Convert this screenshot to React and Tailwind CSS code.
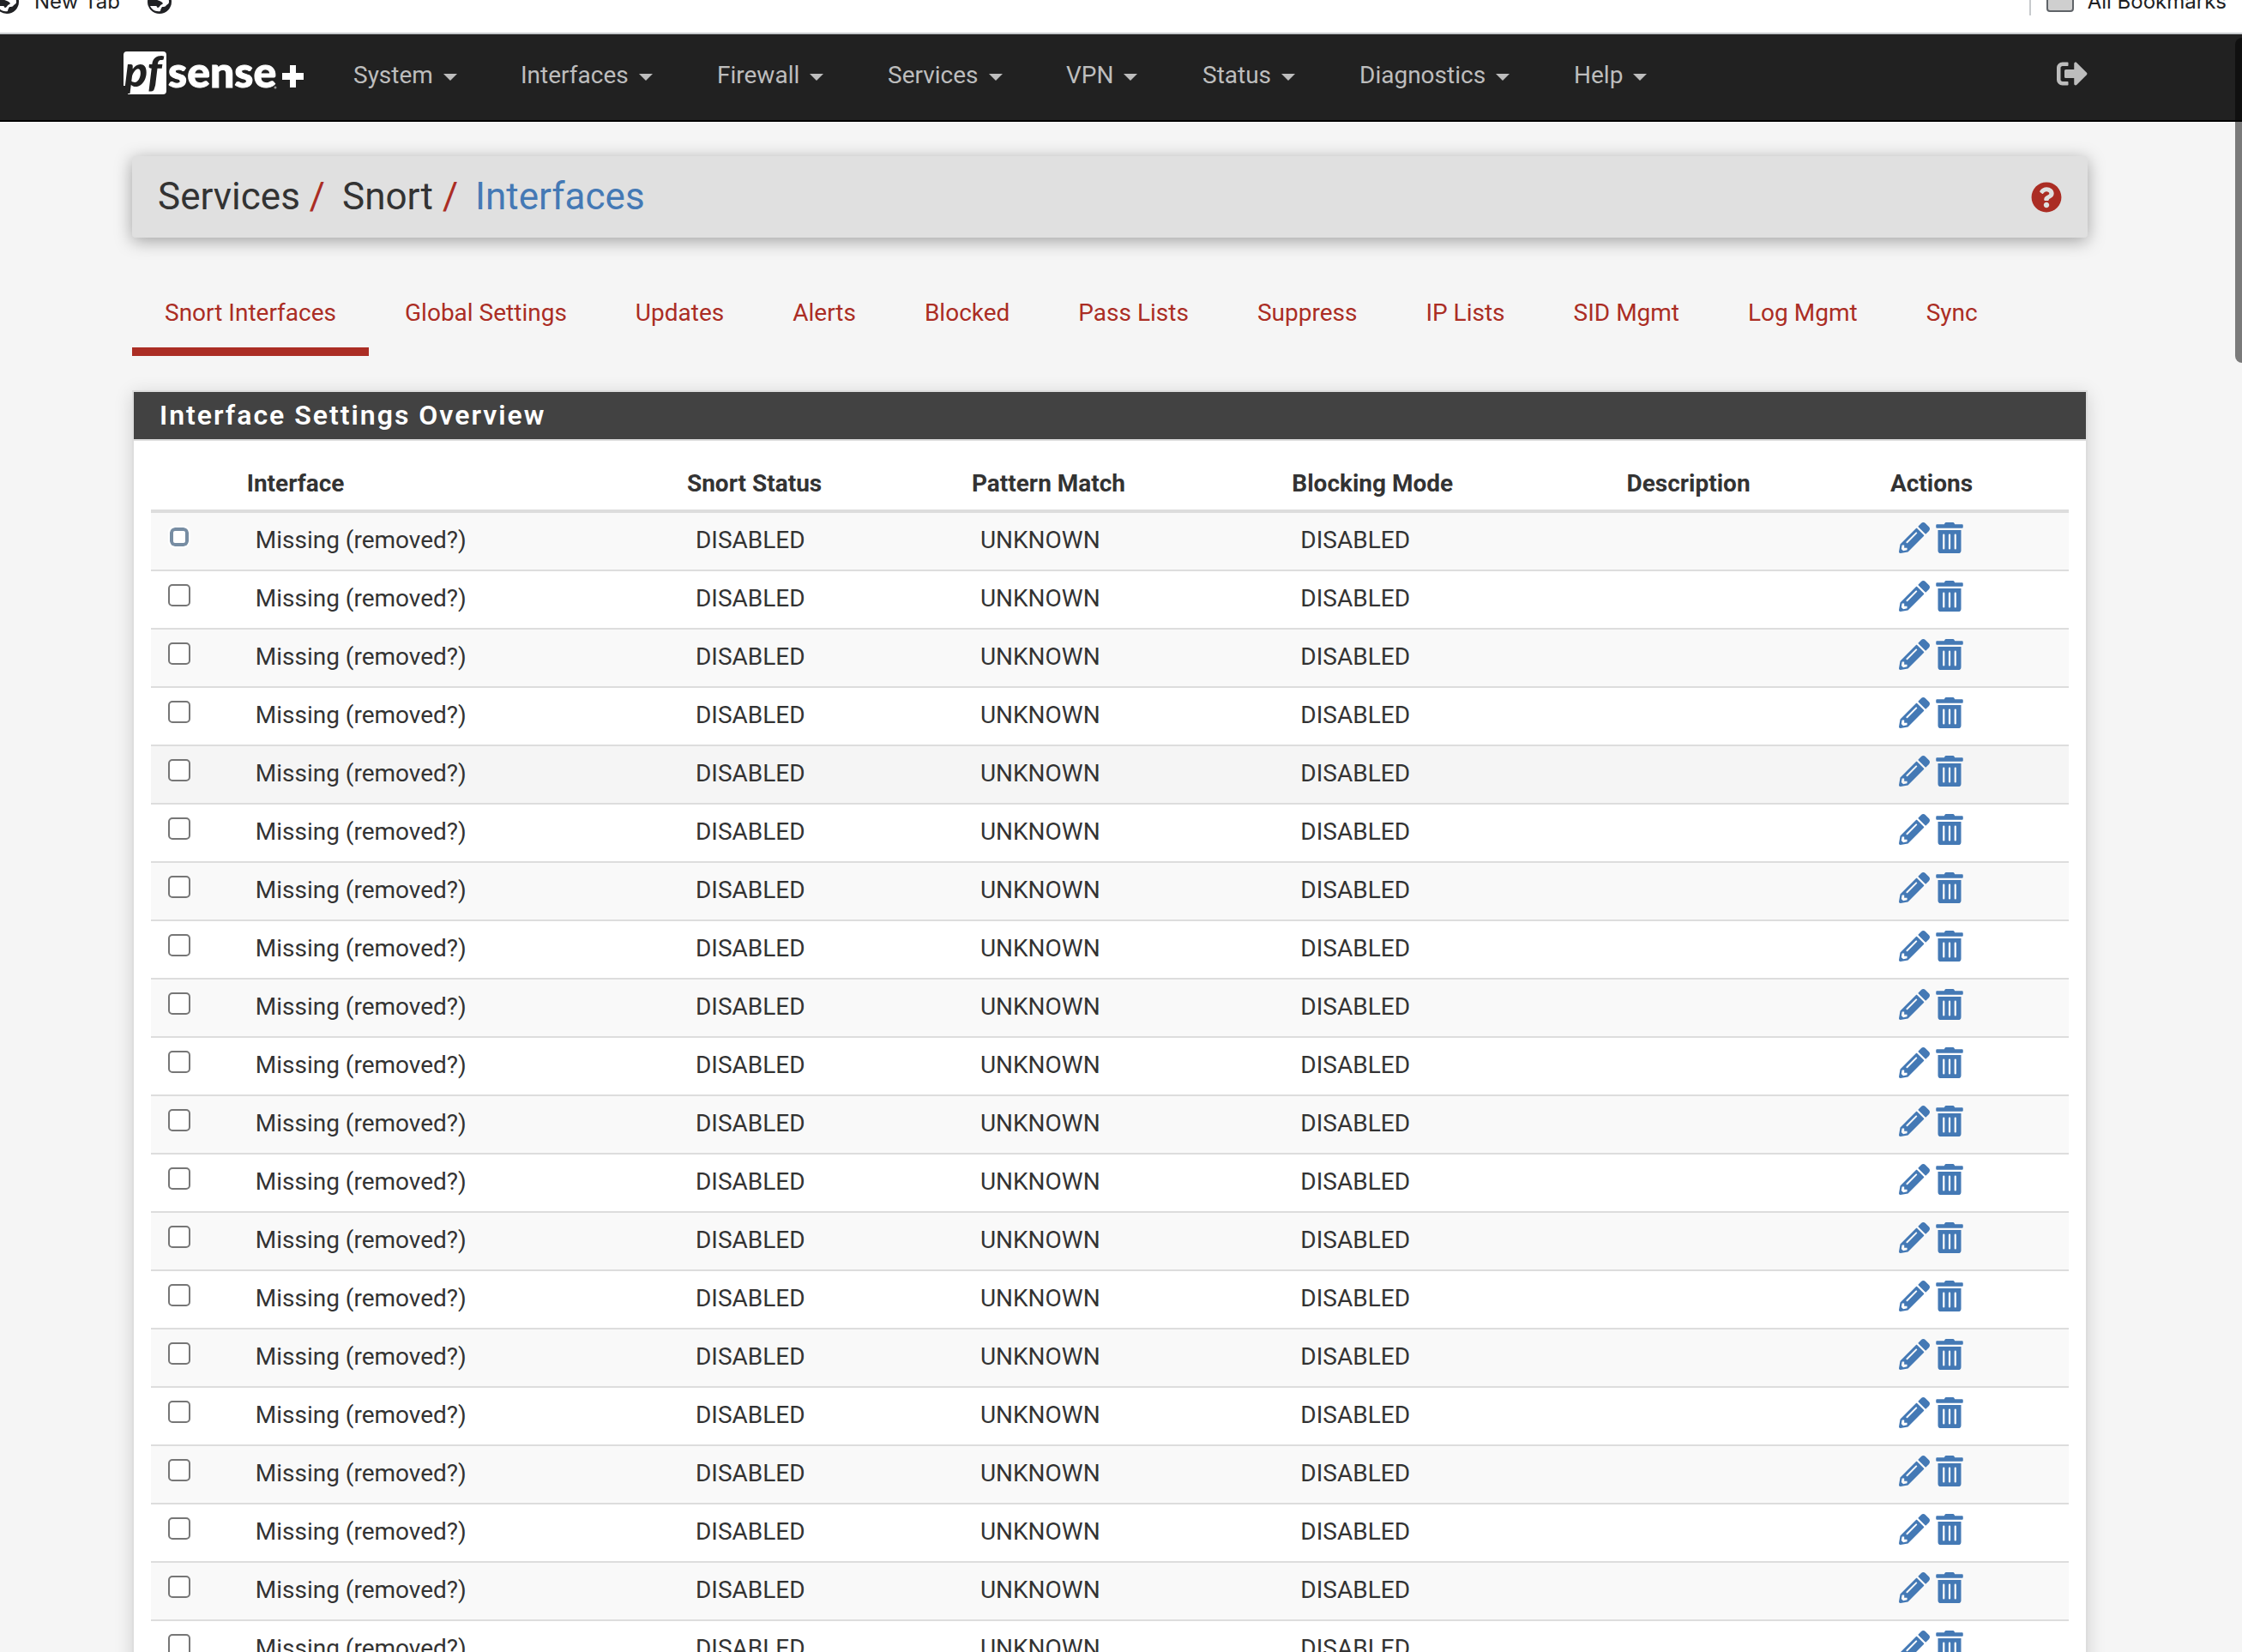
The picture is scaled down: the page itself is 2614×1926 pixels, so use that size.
import { FaPencilAlt, FaTrashAlt, FaSignOutAlt, FaQuestionCircle } from "react-icons/fa";

const MENUS = [
  ["System", "w-[195px]"],
  ["Interfaces", "w-[229px]"],
  ["Firewall", "w-[199px]"],
  ["Services", "w-[208px]"],
  ["VPN", "w-[159px]"],
  ["Status", "w-[183px]"],
  ["Diagnostics", "w-[250px]"],
  ["Help", "w-[160px]"],
];

const TABS = [
  "Snort Interfaces",
  "Global Settings",
  "Updates",
  "Alerts",
  "Blocked",
  "Pass Lists",
  "Suppress",
  "IP Lists",
  "SID Mgmt",
  "Log Mgmt",
  "Sync",
];

const HEADINGS = ["Interface", "Snort Status", "Pattern Match", "Blocking Mode", "Description", "Actions"];

const ROWS = Array.from({ length: 20 }, (_, i) => i);

function Logo() {
  return (
    <svg className="h-[52px] w-[214px] overflow-visible" viewBox="0 0 214 52" role="img" aria-label="pfsense +">
      <path d="M4 0H46a4 4 0 0 1 4 4V46a4 4 0 0 1-4 4H5L8 40H0V4a4 4 0 0 1 4-4Z" fill="#fff" />
      <text x="1" y="41" fontFamily="Lato, sans-serif" fontWeight="900" fontStyle="italic" fontSize="50" fill="#212121">pf</text>
      <text x="52" y="42" fontFamily="Lato, sans-serif" fontWeight="900" fontSize="50" fill="#fff" stroke="#fff" strokeWidth="1">sense</text>
      <circle cx="177" cy="42" r="1.5" fill="#999" />
      <path d="M194 16h7v9h9v8h-9v9h-7v-9h-9v-8h9z" fill="#fff" />
    </svg>
  );
}

function Globe() {
  return (
    <svg className="size-7" viewBox="-14 -14 28 28" aria-hidden="true">
      <circle r="14" fill="#202124" />
      <path
        d="M-10 -5C-8 -9 -4 -11 0 -11C6 -11 11 -6 11 0C11 3 9 3 8 4C7 6 5 6 3 6C2 8 1 9 1 11C-5 12 -9 9 -11 5H-4C-3 5 -3 7 -2 7C0 7 0 4 3 3C5 2 3 0 0 -1C-4 -2 -7 -5 -10 -5Z"
        fill="#fff"
      />
    </svg>
  );
}

function BookmarksBar() {
  return (
    <div className="flex h-10 justify-between overflow-hidden border-b-2 border-[#c7cacd] bg-white font-[Inter,sans-serif] text-2xl text-[#202124]">
      <div className="-mt-3 -ml-1.5 flex items-start">
        <Globe />
        <span className="ml-[18px] leading-7">New Tab</span>
        <span className="ml-8">
          <Globe />
        </span>
      </div>
      <div className="-mt-3 flex items-start pr-[18px]">
        <span className="h-[30px] w-0.5 bg-[#c7cacd]" />
        <span className="ml-[18px] h-[26px] w-8 rounded border-2 border-[#5f6368] bg-[#cfcfcf]" />
        <span className="ml-4 leading-7">All Bookmarks</span>
      </div>
    </div>
  );
}

export default function App() {
  return (
    <div className="relative h-screen overflow-hidden bg-[#f5f5f5] font-[Roboto,sans-serif] text-[28px] text-[#333]">
      <BookmarksBar />
      <header className="flex h-[102px] items-start border-b-2 border-black bg-[#212121] pr-[180px] pl-[144px] text-[#bdbdbd]">
        <a href="#home" className="mt-5 mr-[54px]">
          <Logo />
        </a>
        <nav className="mt-7 flex">
          {MENUS.map(([label, width]) => (
            <div key={label} className={width}>
              <button className="flex items-center gap-3 leading-10">
                {label}
                <span className="mt-1 border-x-8 border-t-8 border-x-transparent border-t-[#bdbdbd]" />
              </button>
            </div>
          ))}
        </nav>
        <button aria-label="Log out" className="mt-7 ml-auto">
          <FaSignOutAlt className="size-9" />
        </button>
      </header>

      <main className="pr-[180px] pl-[154px]">
        <div className="mt-10 flex h-[95px] items-center justify-between rounded bg-[#e0e0e0] px-[30px] shadow-[0_4px_20px_rgba(0,0,0,0.35)]">
          <h1 className="flex pb-0.5 text-[44px] leading-none">
            <span>Services</span>
            <span className="mr-5 ml-[11px] text-[#ab2d24]">/</span>
            <span>Snort</span>
            <span className="mr-5 ml-[11px] text-[#ab2d24]">/</span>
            <a href="#interfaces" className="text-[#4479b5]">Interfaces</a>
          </h1>
          <button aria-label="Help" className="text-[#ab2d24]">
            <FaQuestionCircle className="size-9" />
          </button>
        </div>

        <nav className="mt-[54px] flex gap-1 text-[#ab2d24]">
          {TABS.map((tab, i) => (
            <a
              key={tab}
              href="#tab"
              className={`h-[84px] border-b-10 px-[38px] pt-3.5 leading-10 ${i === 0 ? "border-[#ab2d24]" : "border-transparent"}`}
            >
              {tab}
            </a>
          ))}
        </nav>

        <section className="mt-10 border-2 border-[#ddd] bg-white px-5 shadow-[0_4px_20px_rgba(0,0,0,0.15)]">
          <h2 className="-mx-5 h-[57px] border-b-2 border-[#ddd] bg-[#424242] pl-[30px] text-[32px] leading-[54px] font-semibold tracking-[2px] text-white">
            Interface Settings Overview
          </h2>
          <table className="w-full table-fixed border-separate border-spacing-0">
            <colgroup>
              <col className="w-[4.55%]" />
              <col className="w-[22.95%]" />
              <col className="w-[14.85%]" />
              <col className="w-[16.7%]" />
              <col className="w-[17.45%]" />
              <col className="w-[13.75%]" />
              <col />
            </colgroup>
            <thead>
              <tr className="h-[84px] text-left">
                <td className="border-b-4 border-[#ddd]" />
                {HEADINGS.map((h) => (
                  <th key={h} scope="col" className="border-b-4 border-[#ddd] px-2.5 pt-5 font-bold">{h}</th>
                ))}
              </tr>
            </thead>
            <tbody className="[&_td]:border-b-2 [&_td]:border-[#ddd]">
              {ROWS.map((i) => (
                <tr
                  key={i}
                  className={`h-[68px] ${i === 4 ? "bg-[#f5f5f5]" : i % 2 === 0 ? "bg-[#f9f9f9]" : "bg-white"}`}
                >
                  <td className="pb-2.5 pl-5">
                    <input
                      type="checkbox"
                      aria-label={`Select row ${i + 1}`}
                      className={
                        i === 0
                          ? "block size-[26px] appearance-none rounded-lg border-2 border-white bg-white ring-4 ring-[#778da3] ring-inset"
                          : "block size-[26px] appearance-none rounded-[5px] border-2 border-[#767676] bg-white"
                      }
                    />
                  </td>
                  <td className="px-5 pb-0.5">Missing (removed?)</td>
                  <td className="px-5 pb-0.5">DISABLED</td>
                  <td className="px-5 pb-0.5">UNKNOWN</td>
                  <td className="px-5 pb-0.5">DISABLED</td>
                  <td />
                  <td className="px-5 pb-2">
                    <div className="flex gap-[7px] text-[#4479b5]">
                      <button aria-label="Edit"><FaPencilAlt className="size-9" /></button>
                      <button aria-label="Delete"><FaTrashAlt className="h-9 w-8" /></button>
                    </div>
                  </td>
                </tr>
              ))}
            </tbody>
          </table>
        </section>
      </main>
      <div className="absolute top-11 right-0 h-[379px] w-2 rounded-l-lg bg-black/50" />
    </div>
  );
}
